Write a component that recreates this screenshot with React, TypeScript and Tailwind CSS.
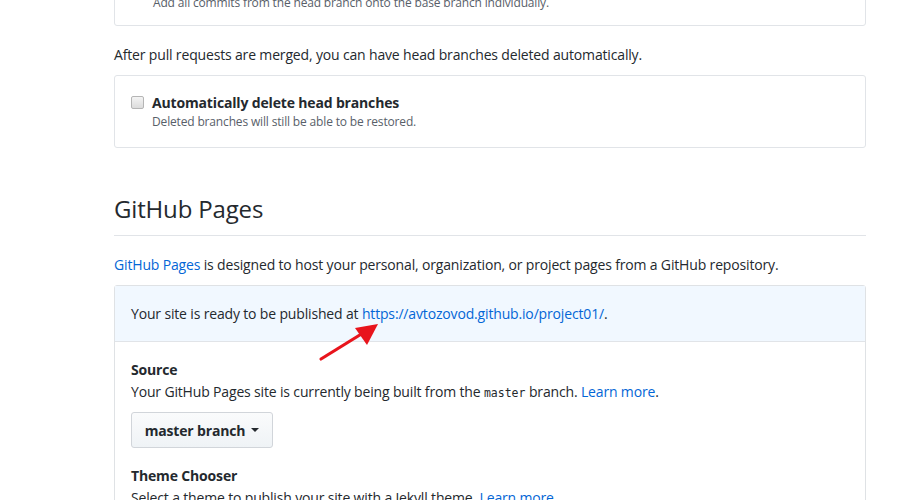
import React from "react";

export default function App() {
  const font = { fontFamily: '"Open Sans", "Liberation Sans", sans-serif', letterSpacing: "-0.16px" };
  return (
    <div className="h-[500px] w-[911px] overflow-hidden bg-white text-[#24292e]" style={font}>
      <div className="ml-[114px] w-[752px]">
        {/* top clipped box */}
        <div className="-mt-[20px] rounded-[3px] border border-[#e1e4e8] px-[38px] pt-[13px] pb-[13px]">
          <p className="text-[12px] leading-[18px] text-[#586069]">
            Add all commits from the head branch onto the base branch individually.
          </p>
        </div>

        <p className="mt-[18px] text-[14px] leading-[21px]">
          After pull requests are merged, you can have head branches deleted automatically.
        </p>

        <div className="mt-[10px] h-[73px] rounded-[3px] border border-[#e1e4e8] px-[16px] pt-[16px]">
          <div className="flex items-center">
            <span className="mr-[8px] inline-block h-[13px] w-[13px] rounded-[2px] border border-[#b5b5b5] bg-gradient-to-b from-[#f4f4f4] to-[#dcdcdc]"></span>
            <span className="text-[14px] font-bold leading-[21px]">Automatically delete head branches</span>
          </div>
          <p className="ml-[21px] text-[12px] leading-[18px] text-[#586069]">
            Deleted branches will still be able to be restored.
          </p>
        </div>

        <h2 className="mt-[43px] border-b border-[#e1e4e8] pb-[8px] text-[24px] font-normal leading-[36px]">
          GitHub Pages
        </h2>

        <p className="mt-[18px] text-[14px] leading-[21px]">
          <span className="text-[#0366d6]">GitHub Pages</span> is designed to host your personal, organization, or project pages from a GitHub repository.
        </p>

        <div className="relative mt-[10px] rounded-[3px] border border-[#dfe2e5]">
          <div className="h-[56px] border-b border-[#e1e4e8] bg-[#f1f8ff] px-[16px] pt-[17px] text-[14px] leading-[21px]">
            Your site is ready to be published at{" "}
            <span className="text-[#0366d6]">https://avtozovod.github.io/project01/</span>.
          </div>
          <div className="px-[16px] pt-[17px] pb-[20px]">
            <div className="text-[14px] font-bold leading-[21px]">Source</div>
            <p className="mt-[1px] text-[14px] leading-[21px]">
              Your GitHub Pages site is currently being built from the{" "}
              <code className="text-[11.5px]" style={{ fontFamily: '"DejaVu Sans Mono", monospace', letterSpacing: "0" }}>master</code> branch.{" "}
              <span className="text-[#0366d6]">Learn more</span>.
            </p>
            <button className="mt-[8px] flex h-[36px] w-[142px] items-center justify-center rounded-[3px] border border-[#d1d5da] bg-gradient-to-b from-[#fafbfc] to-[#eff3f6] text-[14px] font-bold text-[#24292e]">
              master branch
              <span className="ml-[6px] inline-block h-0 w-0 border-x-[4px] border-t-[4px] border-x-transparent border-t-[#24292e]"></span>
            </button>
            <div className="mt-[17px] text-[14px] font-bold leading-[21px]">Theme Chooser</div>
            <p className="mt-[1px] text-[14px] leading-[21px]">
              Select a theme to publish your site with a Jekyll theme. <span className="text-[#0366d6]">Learn more</span>.
            </p>
          </div>
          {/* red arrow annotation */}
          <svg className="pointer-events-none absolute left-[200px] top-[35px]" width="70" height="50" viewBox="0 0 70 50">
            <path d="M6 38 L48 12" stroke="#e8141c" strokeWidth="3.2" strokeLinecap="round" fill="none" />
            <polygon points="63,3 40,7 52,24" fill="#e8141c" />
          </svg>
        </div>
      </div>
    </div>
  );
}
